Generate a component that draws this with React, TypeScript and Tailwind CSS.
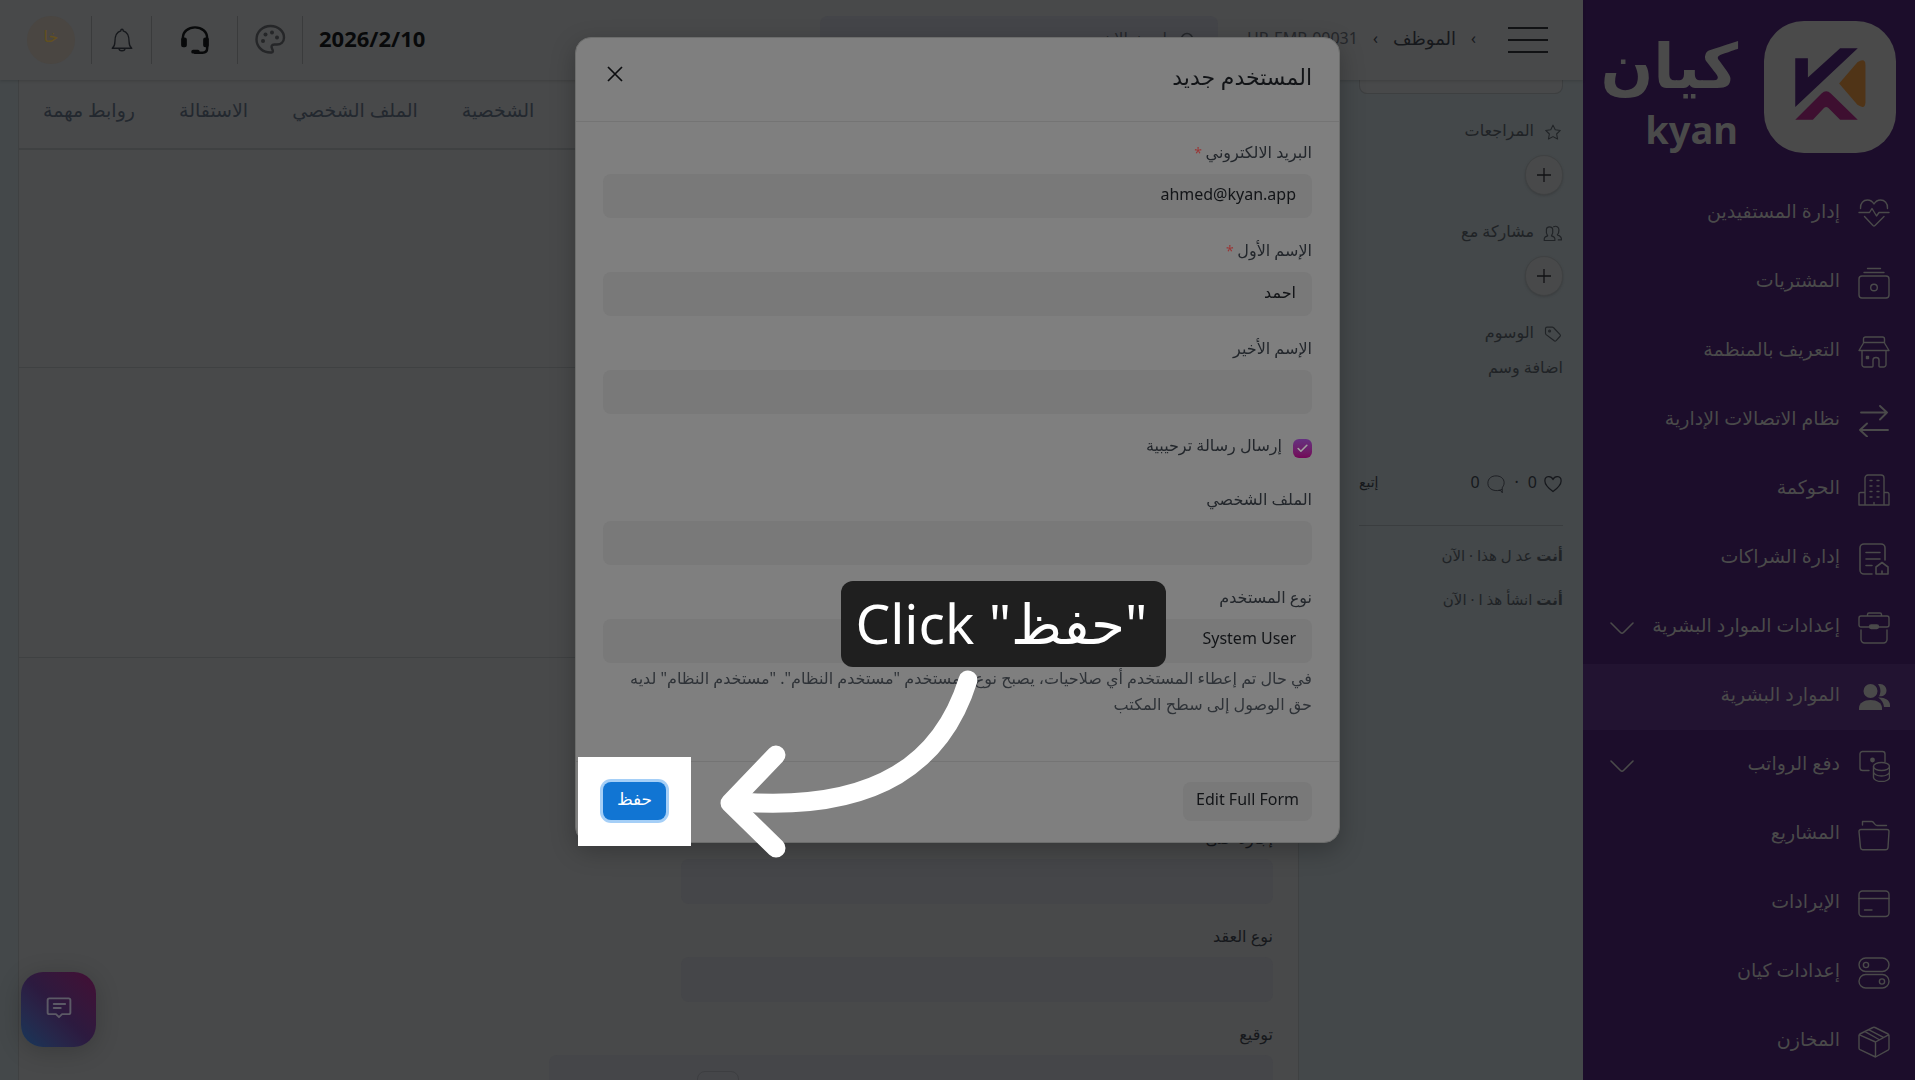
import type { ReactNode } from 'react'
import { Check } from 'lucide-react'

const FONT = "font-['Noto_Sans','DejaVu_Sans',sans-serif]"

function Icon({ children, size = 32, width = 1.4, className = '' }: { children: ReactNode; size?: number; width?: number; className?: string }) {
  return (
    <svg
      width={size}
      height={size}
      viewBox="0 0 32 32"
      fill="none"
      stroke="currentColor"
      strokeWidth={width}
      strokeLinecap="round"
      strokeLinejoin="round"
      className={`shrink-0 ${className}`}
      aria-hidden="true"
    >
      {children}
    </svg>
  )
}

type NavItem = { label: string; icon: ReactNode; expandable?: boolean; active?: boolean }

const NAV: NavItem[] = [
  {
    label: 'إدارة المستفيدين',
    icon: (
      <Icon>
        <path d="M2.500 10.500C2 5 5.500 2 9.500 2c3 0 5 1.500 6.500 4 1.500-2.500 3.500-4 6.500-4 4 0 7.500 3 7 8.500" />
        <path d="M1 14.500h10.500l2.500-4 4.500 7.500 2.500-3.500h10" />
        <path d="M6.500 18.500l8.500 9c.6.6 1.400.6 2 0l9-9" />
      </Icon>
    ),
  },
  {
    label: 'المشتريات',
    icon: (
      <Icon>
        <rect x="1" y="9" width="30" height="22" rx="3" />
        <path d="M9.500 1.500h13M6 5.500h20" />
        <circle cx="16" cy="20.500" r="3.300" />
      </Icon>
    ),
  },
  {
    label: 'التعريف بالمنظمة',
    icon: (
      <Icon>
        <path d="M5.500 7V3a2 2 0 0 1 2-2h17a2 2 0 0 1 2 2v4M5.500 6.500h21M5.500 7L1 14.500h30L26.500 7" />
        <path d="M4 15v13.500a2.500 2.500 0 0 0 2.500 2.500H14c.6 0 1-.4 1-1v-6c0-1.700 1-2.500 3-2.500s3 .8 3 2.500v6c0 .6.4 1 1 1h3.500a2.500 2.500 0 0 0 2.500-2.500V15" />
        <rect x="8.500" y="20.500" width="2" height="2" fill="currentColor" />
      </Icon>
    ),
  },
  {
    label: 'نظام الاتصالات الإدارية',
    icon: (
      <Icon width={1.9}>
        <path d="M3 7.500h26M22 1l7 6.500-7 7M30 25H2M9 18.500L2 25l7 6.500" />
      </Icon>
    ),
  },
  {
    label: 'الحوكمة',
    icon: (
      <Icon>
        <path d="M7 31V4a3 3 0 0 1 3-3h13a3 3 0 0 1 3 3v27M7 18.500H2.500A1.500 1.500 0 0 0 1 20v11h30V20a1.500 1.500 0 0 0-1.500-1.500H26M16 28.500V31" />
        <path d="M12 6.500h2M19 6.500h2M12 12h2M19 12h2M12 17.500h2M19 17.500h2M12 23h2M19 23h2" />
      </Icon>
    ),
  },
  {
    label: 'إدارة الشراكات',
    icon: (
      <Icon width={1.6}>
        <path d="M14 31H6a4 4 0 0 1-4-4V5a4 4 0 0 1 4-4h17a4 4 0 0 1 4 4v12" />
        <path d="M8 9.500h14M8 16h14M8 22.500h6M18 31v-7l6-4.500 6 4.500v7zM24 28v2.500" />
      </Icon>
    ),
  },
  {
    label: 'إعدادات الموارد البشرية',
    expandable: true,
    icon: (
      <Icon>
        <path d="M9.500 4V2.500A1.500 1.500 0 0 1 11 1h11a1.500 1.500 0 0 1 1.500 1.500V4M11 15H3a2 2 0 0 1-2-2V6a2 2 0 0 1 2-2h26a2 2 0 0 1 2 2v7a2 2 0 0 1-2 2h-8M3 18v9.500A3.500 3.500 0 0 0 6.500 31h19a3.500 3.500 0 0 0 3.500-3.500V18" />
        <rect x="11.500" y="13" width="9" height="3.500" rx="1.700" fill="currentColor" />
      </Icon>
    ),
  },
  {
    label: 'الموارد البشرية',
    active: true,
    icon: (
      <Icon>
        <g fill="currentColor" stroke="none">
          <circle cx="12.500" cy="10" r="7" />
          <path d="M1 29v-2c0-5 5-8 11.500-8S24 22 24 27v2z" />
          <path d="M20 3.200c5-1.200 8.500 2.300 8.500 6.300s-3.500 6.500-7.500 5.700c2.500-4 1.500-9-1-12zM20 16.600c6-.6 12 2.400 12 7.400v2h-6c-.4-4-2.500-7.400-6-9.400z" />
        </g>
      </Icon>
    ),
  },
  {
    label: 'دفع الرواتب',
    expandable: true,
    icon: (
      <Icon>
        <path d="M11 20.500H4.500A2.500 2.500 0 0 1 2 18V4a2.500 2.500 0 0 1 2.500-2.500h20A2.500 2.500 0 0 1 27 4v7.500" />
        <circle cx="14.500" cy="10" r="1.700" fill="currentColor" />
        <ellipse cx="23.500" cy="16.500" rx="8" ry="4" />
        <path d="M15.500 16.500v11c0 2 3.500 4 8 4s8-2 8-4v-11M15.500 22c0 2 3.500 4 8 4s8-2 8-4" />
      </Icon>
    ),
  },
  {
    label: 'المشاريع',
    icon: (
      <Icon>
        <path d="M4.500 6V2.500h9.500c2 0 2.500 4 5 4h9.500M3 10.500h26a2 2 0 0 1 2 2l-1 16a2.500 2.500 0 0 1-2.500 2.300h-23A2.500 2.500 0 0 1 2.500 28.500l-1.500-16a2 2 0 0 1 2-2z" />
      </Icon>
    ),
  },
  {
    label: 'الإيرادات',
    icon: (
      <Icon>
        <rect x="1" y="3" width="30" height="25.500" rx="3.500" />
        <path d="M1 10.500h30M6.500 22h7.500" />
      </Icon>
    ),
  },
  {
    label: 'إعدادات كيان',
    icon: (
      <Icon>
        <rect x="1" y="1" width="30" height="13.500" rx="6.700" />
        <rect x="1" y="17.500" width="30" height="13.500" rx="6.700" />
        <circle cx="8" cy="8" r="2.600" />
        <circle cx="24" cy="24.500" r="2.600" />
      </Icon>
    ),
  },
  {
    label: 'المخازن',
    icon: (
      <Icon>
        <path d="M15 1.500L1.800 8Q1 8.500 1 9.500V22q0 1.200 1 1.700L17.500 31 30 24.200q1-.6 1-1.700V9.500q0-1-.8-1.500L17 1.500q-1-.5-2 0M1.500 8.800l16 7.200 13-7.200M17.500 16v15M11 3.800l14.500 7.500M7.500 5.800L21 13.500" />
      </Icon>
    ),
  },
]

function Logo() {
  return (
    <div className="flex items-start justify-between pt-[21px] px-[19px] h-[181px] text-[#4a4a4a]">
      <svg width="132" height="132" viewBox="0 0 397 397" aria-hidden="true" className="shrink-0">
        <rect width="397" height="397" rx="120" fill="#4a4a4a" />
        <path d="M94 112h38v58l97-88h53L94 259z" fill="#1c0d2b" />
        <path d="M226 188l55-64q24-15 24 8v112q0 24-24 8z" fill="#503417" />
        <path d="M94 297l79-79q14-13 28 0l81 79h-53l-36-36q-6-5-12 0l-34 36z" fill="#3e0f30" />
      </svg>
      <div className="flex flex-col items-start pr-[26px] font-bold">
        <span className="text-[62px] leading-[86px]">كيان</span>
        <span dir="ltr" className="text-[38px] leading-[44px]">kyan</span>
      </div>
    </div>
  )
}

function Sidebar() {
  return (
    <aside className="w-[332px] shrink-0 bg-[#1c0d2b] overflow-hidden">
      <Logo />
      <nav className="flex flex-col gap-[3px]">
        {NAV.map(item => (
          <a
            key={item.label}
            href="#"
            className={`flex items-center h-[66px] pr-[25px] pl-[27px] text-[19px] text-[#4a4a4a] ${item.active ? 'bg-[#221331]' : ''}`}
          >
            {item.icon}
            <span className="mr-[18px] pb-[6px] whitespace-nowrap">{item.label}</span>
            {item.expandable && (
              <svg width="24" height="13" viewBox="0 0 24 13" fill="none" stroke="currentColor" strokeWidth="1.600" strokeLinecap="round" className="mr-auto" aria-hidden="true">
                <path d="M1 1l9.500 9.500q1.500 1.500 3 0L23 1" />
              </svg>
            )}
          </a>
        ))}
      </nav>
    </aside>
  )
}

function Header() {
  return (
    <header className="relative flex items-center h-20 shrink-0 pr-[35px] pl-[27px] bg-[#48494a] shadow-[0_1px_3px_rgba(0,0,0,0.15)] text-[#16181c]">
      <button aria-label="القائمة" className="flex flex-col gap-[10px] w-10">
        <span className="h-[2px] bg-[#111214]" />
        <span className="h-[2px] bg-[#111214]" />
        <span className="h-[2px] bg-[#111214]" />
      </button>
      <nav className="flex items-center gap-[15px] mr-8 pb-1 text-base w-[228px] whitespace-nowrap">
        <span>›</span>
        <a href="#" className="text-[18px] font-medium">الموظف</a>
        <span>›</span>
        <span dir="ltr" className="text-[#25272b]">HR-EMP-00031</span>
      </nav>
      <label className="flex items-center gap-[13px] w-[398px] h-12 mr-[30px] pr-[22px] rounded-lg bg-[#444549] text-[#25272b]">
        <svg width="16" height="16" viewBox="0 0 16 16" fill="none" stroke="currentColor" strokeWidth="1.500" aria-hidden="true">
          <circle cx="7" cy="7" r="5.500" />
          <path d="M11 11l4 4" />
        </svg>
        <input type="search" placeholder="ابحث الان" className="flex-1 bg-transparent pb-1 text-base placeholder:text-[#25272b]" />
      </label>
      <div className="flex items-center mr-auto">
        <time className="pb-1 pl-4 text-[22px] font-bold text-[#08090a]">2026/2/10</time>
        <button aria-label="المظهر" className="flex justify-center w-[65px] h-12 items-center border-r border-[#3a3b3c] text-[#252628]">
          <Icon width={2.4}>
            <path d="M17.500 28.500C9 29 2.500 23 2.500 15.500S8.500 2 16.500 2 30 7.500 30 13.500c0 5-3.500 7-7 7h-2.500c-3 0-3.500 2-2.500 4s1.500 3.800-.5 4z" />
            <g fill="currentColor" stroke="none">
              <circle cx="11.500" cy="10.500" r="2" />
              <circle cx="18" cy="8.500" r="2" />
              <circle cx="23" cy="13.500" r="2" />
              <circle cx="9" cy="17" r="2" />
            </g>
          </Icon>
        </button>
        <button aria-label="الدعم" className="flex justify-center w-[86px] h-12 items-center border-r border-[#3a3b3c] text-[#08090a]">
          <Icon size={30} width={2.6}>
            <path d="M3 15v-1C3 7 9 2.500 16 2.500S29 7 29 14v1M29 22v2.500c0 3-2 5-5 5h-8" />
            <rect x="2.500" y="14.500" width="3.500" height="8" rx="1" fill="currentColor" />
            <rect x="26" y="14.500" width="3.500" height="8" rx="1" fill="currentColor" />
            <path d="M14 28.500h5" strokeWidth="4" />
          </Icon>
        </button>
        <button aria-label="الإشعارات" className="flex justify-center w-[60px] h-12 items-center border-r border-[#3a3b3c]">
          <Icon size={24} width={1.8}>
            <path d="M3 27c2.500-2 3.500-4 3.500-8.500C6.500 10 9.500 5 14.500 3.800V3c0-2 3-2 3 0v.8c5 1.200 8 6.200 8 14.700 0 4.500 1 6.500 3.500 8.500zM12 27c0 4.500 8 4.500 8 0" />
          </Icon>
        </button>
        <div className="h-12 pl-4 border-r border-[#3a3b3c]" />
        <button className="w-12 h-12 pb-2 rounded-full bg-[#4a4642] text-base text-[#63501f]">خا</button>
      </div>
    </header>
  )
}

function AsideHeading({ icon, children }: { icon: ReactNode; children: ReactNode }) {
  return (
    <div className="flex items-center gap-[9px] h-6 text-base">
      {icon}
      <span className="pb-1">{children}</span>
    </div>
  )
}

function AddButton({ label }: { label: string }) {
  return (
    <button aria-label={label} className="flex items-center justify-center w-[38px] h-[40px] rounded-full bg-[#48494a] border border-[#3f4142] shadow-sm text-[#111214]">
      <svg width="14" height="14" viewBox="0 0 14 14" stroke="currentColor" strokeWidth="1.300" aria-hidden="true">
        <path d="M7 0v14M0 7h14" />
      </svg>
    </button>
  )
}

function DocAside() {
  return (
    <div className="w-[284px] shrink-0 pr-[20px] pl-[60px] text-base text-[#202326]">
      <div className="h-[14px] rounded-b-lg bg-[#48494a] border border-t-0 border-[#3d3f40]" />
      <div className="flex flex-col items-start mt-[26px]">
        <AsideHeading
          icon={
            <Icon size={20} width={1.7}>
              <path d="M16 5l3.600 7.400 8.100 1.100-5.900 5.700 1.500 8L16 23.400 8.700 27.200l1.500-8-5.900-5.700 8.100-1.100z" />
            </Icon>
          }
        >
          المراجعات
        </AsideHeading>
        <div className="mt-[11px]"><AddButton label="إضافة مراجعة" /></div>
        <div className="mt-[26px]">
          <AsideHeading
            icon={
              <Icon size={20} width={1.9}>
                <path d="M2 28c-.5-5 1-6 5.500-7.500C5 17 5 13 5.500 10c.8-5 9.200-5 10 0 .5 3 .5 7-2 10.500C18 22 19.500 23 19 28zM17 6c4-2 8.500 0 8.500 5 0 4-1 6-2.500 8 4 1.500 7 3 6.500 8h-5" />
              </Icon>
            }
          >
            مشاركة مع
          </AsideHeading>
        </div>
        <div className="mt-[11px]"><AddButton label="إضافة مشاركة" /></div>
        <div className="mt-[26px]">
          <AsideHeading
            icon={
              <Icon size={20} width={1.8}>
                <path d="M4 7.500A2.500 2.500 0 0 1 6.500 5h8c1 0 2 .4 2.500 1l10 10.500c1.200 1.200 1.200 2.500 0 3.500l-6 6.500c-1 1-2.500 1-3.500 0L5 17c-.6-.6-1-1.500-1-2.500z" />
                <circle cx="10.500" cy="11" r="1.500" />
              </Icon>
            }
          >
            الوسوم
          </AsideHeading>
        </div>
        <button className="mt-[9px] h-6">اضافة وسم</button>
      </div>
      <div className="flex items-center mt-[93px] h-6 text-[#16181c]">
        <Icon size={20} width={2}>
          <path d="M16 28C8 22 3 17 3 11c0-8 10-9 13-2 3-7 13-6 13 2 0 6-5 11-13 17z" />
        </Icon>
        <span className="mr-[6px] pb-1">0</span>
        <span className="mx-[9px] pb-1">·</span>
        <Icon size={20} width={1.3}>
          <path d="M25 25c-8 4-22 1-22-10C3 7 9 3 16 3s13 4 13 11c0 4-2 6-3 8v8c-1-2-2-4-5-4" />
        </Icon>
        <span className="mr-[6px] pb-1">0</span>
        <button className="mr-auto pb-1 text-sm">إتبع</button>
      </div>
      <hr className="mt-[29px] border-[#3a3d3f]" />
      <p className="mt-[18px] h-7 text-[15px]"><b>أنت</b> عد ل هذا · الآن</p>
      <p className="mt-4 h-7 text-[15px]"><b>أنت</b> انشأ هذ ا · الآن</p>
    </div>
  )
}

function PageField({ id, label }: { id: string; label: string }) {
  return (
    <div className="flex flex-col">
      <label htmlFor={id} className="h-[29px] text-base leading-4 text-[#16181c]">{label}</label>
      <input id={id} className="h-[45px] mb-6 rounded-lg bg-[#454649]" />
    </div>
  )
}

const TABS = ['نظرة عامة', 'الحضور والإجازات', 'الراتب', 'الشخصية', 'الملف الشخصي', 'الاستقالة', 'روابط مهمة']

function FormCard() {
  return (
    <main className="flex-1 min-w-0 ml-[18px] bg-[#48494a] border-x border-[#3f4142] overflow-hidden">
      <div className="flex justify-end gap-11 h-[70px] pt-4 pl-6 border-b-2 border-[#3f4142] text-[19px] text-[#23282f] whitespace-nowrap">
        {TABS.map(tab => (
          <a key={tab} href="#">{tab}</a>
        ))}
      </div>
      <div className="h-[218px] border-b border-[#3f4142]" />
      <div className="h-[290px] border-b border-[#3f4142]" />
      <div className="w-1/2 pt-[172px] pr-[25px] pl-[22px]">
        <PageField id="leave-end" label="إجازة حتى" />
        <PageField id="contract" label="نوع العقد" />
        <p className="h-[29px] text-base leading-4 text-[#16181c]">توقيع</p>
        <div className="w-[724px] h-40 pt-4 pr-[534px] rounded-lg bg-[#454649]">
          <div className="w-[42px] h-10 rounded-lg border border-[#3d3e41]" />
        </div>
      </div>
    </main>
  )
}

function ModalField({ id, label, required, value = '' }: { id: string; label: string; required?: boolean; value?: string }) {
  return (
    <div className="flex flex-col">
      <label htmlFor={id} className="h-8 text-base leading-5 text-[#23272c]">
        {label}
        {required && <span className="text-sm text-[#9a3636]"> *</span>}
      </label>
      <input id={id} defaultValue={value} className="h-[44px] mb-[22px] px-4 pb-1 rounded-lg bg-[#797979] text-base text-[#121417] outline-none" />
    </div>
  )
}

function UserModal() {
  return (
    <div
      role="dialog"
      aria-labelledby="modal-title"
      className="relative w-[765px] h-fit rounded-2xl bg-[#7f7f7f] border border-[#6c6d6c] shadow-[0_8px_24px_rgba(0,0,0,0.25)]"
    >
      <div className="flex items-center justify-between h-[84px] px-[27px] pb-1 border-b border-[#747474]">
        <h2 id="modal-title" className="pb-[2px] text-[22px] text-[#121417]">المستخدم جديد</h2>
        <button aria-label="إغلاق" className="pb-2 pl-[4px] text-[#0c0d0f]">
          <svg width="16" height="16" viewBox="0 0 16 16" stroke="currentColor" strokeWidth="1.700" aria-hidden="true">
            <path d="M1 1l14 14M15 1L1 15" />
          </svg>
        </button>
      </div>
      <form className="px-[27px] pt-5">
        <ModalField id="email" label="البريد الالكتروني" required value="ahmed@kyan.app" />
        <ModalField id="first-name" label="الإسم الأول" required value="احمد" />
        <ModalField id="last-name" label="الإسم الأخير" />
        <div className="flex items-center gap-[11px] h-6 mb-[29px] text-base text-[#23272c]">
          <span className="relative flex w-[19px] h-[19px]">
            <input id="welcome" type="checkbox" defaultChecked className="appearance-none w-full h-full rounded-md bg-linear-to-b from-[#653080] to-[#720558]" />
            <Check size={13} strokeWidth={3} className="absolute inset-[3px] text-[#a0a0a0] pointer-events-none" />
          </span>
          <label htmlFor="welcome" className="pb-[6px]">إرسال رسالة ترحيبية</label>
        </div>
        <ModalField id="role-profile" label="الملف الشخصي" />
        <div className="flex flex-col">
          <label htmlFor="user-type" className="h-8 text-base leading-5 text-[#23272c]">نوع المستخدم</label>
          <select id="user-type" className="appearance-none h-[44px] px-4 pb-[6px] rounded-lg bg-[#797979] text-base text-[#121417]">
            <option>System User</option>
          </select>
          <p className="mt-[2px] h-[96px] pl-5 text-base leading-[26px] text-[#2f3338]">
            في حال تم إعطاء المستخدم أي صلاحيات، يصبح نوع المستخدم "مستخدم النظام". "مستخدم النظام" لديه حق الوصول إلى سطح المكتب
          </p>
        </div>
      </form>
      <div className="flex items-start justify-between h-[81px] px-[27px] pt-5 border-t border-[#747474]">
        <button dir="ltr" className="h-[39px] px-[13px] pb-[6px] rounded-lg bg-[#797979] text-base text-[#121417]">Edit Full Form</button>
        <div className="relative">
          <span className="absolute -top-[25px] -left-[25px] w-[113px] h-[89px] bg-white" />
          <button className="relative w-[63px] h-[38px] pb-1 rounded-lg bg-[#1175d3] text-[17px] text-white ring-3 ring-[#a5cff7]">حفظ</button>
        </div>
      </div>
      <Callout />
    </div>
  )
}

// guide bubble and arrow that float over the dialog
function Callout() {
  return (
    <>
      <div dir="ltr" className="absolute left-[265px] top-[543px] flex items-center justify-center w-[325px] h-[86px] pr-1 pb-1 rounded-xl bg-[#1f1f1f] text-[55px] leading-none text-white whitespace-nowrap">
        Click "حفظ"
      </div>
      <svg className="absolute left-[134px] top-[623px]" width="280" height="210" viewBox="710 661 280 210" fill="none" stroke="#fff" strokeWidth="19" strokeLinecap="round" strokeLinejoin="round" aria-hidden="true">
        <path d="M968 680C943 760 880 812 740 802" />
        <path d="M776 755l-46 48 46 45" />
      </svg>
    </>
  )
}

export default function App() {
  return (
    <div dir="rtl" className={`flex h-screen overflow-hidden bg-[#44484a] ${FONT}`}>
      <Sidebar />
      <div className="flex flex-col flex-1 min-w-0">
        <Header />
        <div className="flex flex-1 min-h-0">
          <DocAside />
          <FormCard />
        </div>
      </div>
      <button aria-label="محادثة" className="fixed left-[21px] bottom-[33px] flex items-center justify-center w-[75px] h-[75px] pb-1 rounded-[22px] bg-linear-to-bl from-[#430d34] via-[#2c1a3f] to-[#13375a] shadow-[0_4px_24px_rgba(0,0,0,0.2)] text-[#5c5a66]">
        <Icon size={28} width={2.2}>
          <path d="M5 5h22a2 2 0 0 1 2 2v14a2 2 0 0 1-2 2h-7.500L16 26.500 12.500 23H5a2 2 0 0 1-2-2V7a2 2 0 0 1 2-2zM10 11.500h13M10 16h8" />
        </Icon>
      </button>
      <div className="fixed inset-0 flex justify-center pt-[37px]">
        <UserModal />
      </div>
    </div>
  )
}
